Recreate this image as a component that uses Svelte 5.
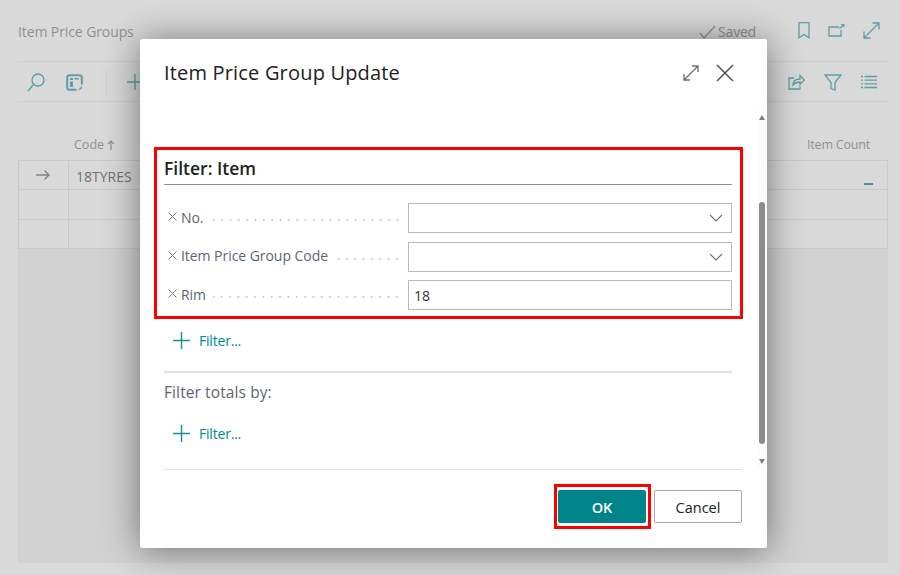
<script lang="ts">
  const rows = [
    { code: '18TYRES', current: true },
    { code: '', current: false },
    { code: '', current: false }
  ];

  const filters = [
    { label: 'No.', value: '', lookup: true },
    { label: 'Item Price Group Code', value: '', lookup: true },
    { label: 'Rim', value: '18', lookup: false }
  ];
</script>

<div class="page">
  <header class="page-head">
    <span class="page-title">Item Price Groups</span>
    <span class="saved">
      <svg width="17" height="14" viewBox="0 0 17 14"><path d="M1 8l4 5L16 1" /></svg>
      Saved
    </span>
    <div class="head-icons">
      <svg width="12" height="17" viewBox="0 0 12 17"><path d="M1 .7h10v15L6 12.500 1 15.700z" /></svg>
      <svg width="17" height="13" viewBox="0 0 17 13"><path d="M11 3H1v9h12V6M11.500 4.500L15 1.500" /><path class="solid" d="M12.500 0H16.500V3.500z" /></svg>
      <svg width="17" height="17" viewBox="0 0 17 17"><path d="M1 16L16 1M9.500 1h6.500v6.500M1 9.500V16h6.500" /></svg>
    </div>
  </header>

  <div class="toolbar">
    <svg class="tb-search" width="18" height="19" viewBox="0 0 18 19"><circle cx="11" cy="7" r="6" /><path d="M6.500 11.500L1 18" /></svg>
    <svg class="tb-layout" width="17" height="17" viewBox="0 0 17 17">
      <path class="thick" d="M15.800 10.500V3.500a2.300 2.300 0 0 0-2.300-2.300h-10a2.300 2.300 0 0 0-2.300 2.300v10a2.300 2.300 0 0 0 2.300 2.300h7" />
      <path class="solid" d="M4 4h3v2H4zM4 7.500h3V13H4zM8.500 4H13v1.500H8.500z" />
      <path d="M12.500 15.500a3 3 0 0 0 3-3" />
    </svg>
    <span class="tb-sep"></span>
    <svg class="tb-plus" width="16" height="16" viewBox="0 0 16 16"><path d="M8 0v16M0 8h16" /></svg>
    <div class="tb-right">
      <svg width="17" height="16" viewBox="0 0 17 16"><path d="M6 4H1v11h11v-3M5 11c0-4 3-6 7-6V1.500L16.300 6 12 10.500V8c-3 0-5 .8-7 3z" /></svg>
      <svg width="18" height="17" viewBox="0 0 18 17"><path d="M1 1h16l-6 7.500V16l-4-1.500v-6z" /></svg>
      <svg width="16" height="14" viewBox="0 0 16 14"><path d="M0 1.500h2M3.500 1.500H16M0 5.200h2M3.500 5.200H16M0 8.900h2M3.500 8.900H16M0 12.500h2M3.500 12.500H16" /></svg>
    </div>
  </div>

  <div class="col-head">
    <span class="col-code">Code<svg width="8" height="10" viewBox="0 0 8 10"><path d="M4 10V1M1 4l3-3 3 3" /></svg></span>
    <span class="col-count">Item Count</span>
  </div>

  <div class="grid">
    {#each rows as row}
      <div class="grid-row">
        <div class="cell-mark">
          {#if row.current}
            <svg width="14" height="10" viewBox="0 0 14 10"><path d="M0 5h13M8.500.5L13 5 8.500 9.500" /></svg>
          {/if}
        </div>
        <div class="cell-code">{row.code}</div>
        {#if row.current}<span class="dash"></span>{/if}
      </div>
    {/each}
  </div>
  <div class="grid-rest"></div>

  <section class="dialog">
    <div class="dialog-head">
      <h1>Item Price Group Update</h1>
      <svg class="ic-expand" width="16" height="16" viewBox="0 0 16 16"><path d="M1 15L15 1M9 1h6v6M1 9v6h6" /></svg>
      <svg class="ic-close" width="18" height="18" viewBox="0 0 18 18"><path d="M1 1l16 16M17 1L1 17" /></svg>
    </div>

    <div class="scroll-wrap">
      <div class="content">
        <h2>Filter: Item</h2>
        <div class="fields">
          {#each filters as f}
            <div class="field">
              <svg class="ic-x" width="9" height="9" viewBox="0 0 9 9"><path d="M.5.5l8 8M8.500.5l-8 8" /></svg>
              <span class="field-label">{f.label}</span>
              <span class="leader"></span>
              <div class="input">
                {f.value}
                {#if f.lookup}
                  <svg width="14" height="8" viewBox="0 0 14 8"><path d="M1 1l6 6 6-6" /></svg>
                {/if}
              </div>
            </div>
          {/each}
        </div>

        <button class="add-filter first">
          <svg width="17" height="17" viewBox="0 0 17 17"><path d="M8.500 0v17M0 8.500h17" /></svg>
          Filter...
        </button>
        <div class="divider"></div>
        <div class="totals">Filter totals by:</div>
        <button class="add-filter second">
          <svg width="17" height="17" viewBox="0 0 17 17"><path d="M8.500 0v17M0 8.500h17" /></svg>
          Filter...
        </button>
      </div>

      <div class="scrollbar">
        <span class="arrow up"></span>
        <span class="thumb"></span>
        <span class="arrow down"></span>
      </div>
    </div>

    <footer class="dialog-foot">
      <button class="btn primary">OK</button>
      <button class="btn">Cancel</button>
    </footer>

    <div class="callout callout-filter"></div>
    <div class="callout callout-ok"></div>
  </section>
</div>

<style>
  :global(body) {
    margin: 0;
    background: #d9d9d9;
    overflow: hidden;
  }

  .page {
    position: relative;
    box-sizing: border-box;
    width: 900px;
    height: 575px;
    padding: 0 12px 12px 18px;
    display: flex;
    flex-direction: column;
    font-family: "Open Sans", "Noto Sans", sans-serif;
    font-size: 14px;
    color: #8d9196;
  }

  svg {
    fill: none;
    stroke: currentColor;
    stroke-width: 1.3;
    flex: none;
    display: block;
  }

  svg .solid {
    fill: currentColor;
    stroke: none;
  }

  svg .thick {
    stroke-width: 2;
  }

  .page-head {
    height: 62px;
    flex: none;
    box-sizing: border-box;
    display: flex;
    align-items: center;
    padding-top: 2px;
    border-bottom: 1px solid #cdcdcd;
  }

  .page-title {
    flex: 1;
    letter-spacing: -0.1px;
  }

  .saved {
    display: flex;
    align-items: center;
    gap: 2px;
    letter-spacing: -0.2px;
  }

  .saved svg {
    stroke: #8d9196;
  }

  .head-icons {
    display: flex;
    align-items: center;
    color: #5e9da1;
    gap: 18px;
    margin: -2px 8px 0 42px;
  }

  .toolbar {
    height: 40px;
    flex: none;
    box-sizing: border-box;
    display: flex;
    align-items: center;
    padding: 1px 11px 0 9px;
    border-bottom: 1px solid #cdcdcd;
    color: #5e9da1;
  }

  .tb-search { margin-right: 21px; }
  .tb-layout { margin-right: 23px; }
  .tb-sep {
    width: 1px;
    height: 24px;
    background: #cdcdcd;
    margin-right: 20px;
  }

  .tb-right {
    margin-left: auto;
    display: flex;
    align-items: center;
    gap: 19px;
  }

  .col-head {
    height: 58px;
    flex: none;
    box-sizing: border-box;
    display: flex;
    align-items: flex-end;
    justify-content: space-between;
    padding: 0 18px 5px 56px;
    font-size: 12.500px;
    line-height: 20px;
    color: #8d9196;
  }

  .col-count {
    letter-spacing: -0.2px;
  }

  .col-code {
    display: flex;
    align-items: center;
    gap: 3px;
  }

  .grid {
    flex: none;
    border: 1px solid #c9c9c9;
    border-bottom: 0;
  }

  .grid-row {
    height: 28.300px;
    display: flex;
    align-items: center;
    position: relative;
    border-bottom: 1.500px solid #c9c9c9;
  }

  .cell-mark {
    width: 50px;
    height: 100%;
    box-sizing: border-box;
    display: flex;
    align-items: center;
    justify-content: center;
    padding-right: 1px;
    color: #7f8387;
    border-right: 1px solid #c9c9c9;
  }

  .cell-code {
    padding: 3px 0 0 7px;
    color: #6f7276;
  }

  .dash {
    position: absolute;
    right: 14px;
    top: 22px;
    width: 9px;
    height: 2px;
    background: #4f8f93;
  }

  .grid-rest {
    flex: 1;
    background: #d2d2d2;
  }

  /* dialog sits over the dimmed page */
  .dialog {
    position: absolute;
    left: 140px;
    top: 39px;
    width: 627px;
    height: 509px;
    display: flex;
    flex-direction: column;
    background: #fff;
    border-radius: 2px;
    box-shadow: 0 2px 36px rgba(0, 0, 0, 0.48);
    color: #212121;
  }

  .dialog-head {
    height: 71px;
    flex: none;
    box-sizing: border-box;
    display: flex;
    align-items: center;
    padding: 0 33px 4px 24px;
  }

  h1 {
    flex: 1;
    margin: 0;
    font-size: 20px;
    font-weight: 500;
    letter-spacing: 0.18px;
    color: #212121;
  }

  .ic-expand {
    color: #6d6d6d;
    margin-right: 17px;
  }

  .ic-close {
    color: #505050;
    stroke-width: 1.5;
  }

  .scroll-wrap {
    flex: 1;
    min-height: 0;
    display: flex;
  }

  .content {
    flex: 1;
    box-sizing: border-box;
    padding: 46px 25px 0 24px;
  }

  h2 {
    margin: 0;
    height: 28px;
    box-sizing: content-box;
    font-size: 17.500px;
    font-weight: 600;
    line-height: 24px;
    border-bottom: 1px solid #8e8e8e;
  }

  .fields {
    margin-top: 18px;
    display: flex;
    flex-direction: column;
    gap: 8.500px;
  }

  .field {
    display: flex;
    align-items: center;
    height: 30px;
    color: #5d6673;
  }

  .ic-x {
    margin: 0 4px 3px 4px;
    color: #777;
    stroke-width: 1;
  }

  .field-label {
    white-space: nowrap;
    letter-spacing: -0.05px;
    margin-bottom: 2px;
  }

  .leader {
    flex: 1;
    height: 4px;
    margin: 4px 7px 0 7px;
    background: radial-gradient(circle, #c3c6ca 0.8px, transparent 1.200px) right center / 8.350px 4px repeat-x;
  }

  .input {
    width: 324px;
    height: 30px;
    flex: none;
    box-sizing: border-box;
    display: flex;
    align-items: center;
    justify-content: space-between;
    padding: 0 8px 0 5px;
    border: 1px solid #b6bbc3;
    color: #333;
  }

  .input svg {
    color: #6b6f75;
    margin-left: auto;
    stroke-width: 1.1;
  }

  .add-filter {
    display: flex;
    align-items: center;
    gap: 9px;
    height: 30px;
    padding: 0 0 0 9px;
    background: none;
    border: 0;
    font: inherit;
    letter-spacing: -0.2px;
    color: #008b8f;
  }

  .add-filter svg {
    color: #1a9396;
    stroke-width: 1.5;
  }

  .add-filter.first { margin-top: 15px; }
  .add-filter.second { margin-top: 15px; }

  .divider {
    height: 2px;
    margin-top: 16px;
    background: #e2e2e6;
  }

  .totals {
    margin-top: 8px;
    line-height: 22px;
    font-size: 15.500px;
    letter-spacing: 0.1px;
    color: #5d6673;
  }

  .scrollbar {
    width: 10px;
    flex: none;
    background: #fcfcfc;
    position: relative;
    height: 358px;
  }

  .arrow {
    position: absolute;
    left: 2px;
    width: 0;
    height: 0;
    border-left: 3.500px solid transparent;
    border-right: 3.500px solid transparent;
  }

  .arrow.up {
    top: 5px;
    border-bottom: 5px solid #808080;
  }

  .arrow.down {
    top: 349px;
    border-top: 5px solid #808080;
  }

  .thumb {
    position: absolute;
    top: 92px;
    left: 2px;
    width: 6px;
    height: 242px;
    border-radius: 3px;
    background: #8c8c8c;
  }

  .dialog-foot {
    flex: none;
    height: 79px;
    box-sizing: border-box;
    margin: 0 25px 0 24px;
    padding-top: 20px;
    border-top: 1px solid #e0e0e0;
    display: flex;
    justify-content: flex-end;
    gap: 8px;
  }

  .btn {
    width: 88px;
    height: 33px;
    padding: 2px 0 0;
    box-sizing: border-box;
    border: 1px solid #a8a8a8;
    border-radius: 2px;
    background: #fff;
    color: #212121;
    font: inherit;
    font-size: 14.500px;
    font-weight: 500;
  }

  .btn.primary {
    background: #008489;
    border-color: #008489;
    color: #fff;
    font-weight: 600;
  }

  .callout {
    position: absolute;
    box-sizing: border-box;
    border: 3px solid #ff0000;
    pointer-events: none;
  }

  .callout-filter {
    left: 14px;
    top: 108px;
    width: 589px;
    height: 172px;
  }

  .callout-ok {
    left: 414px;
    top: 445px;
    width: 97px;
    height: 45px;
  }
</style>
